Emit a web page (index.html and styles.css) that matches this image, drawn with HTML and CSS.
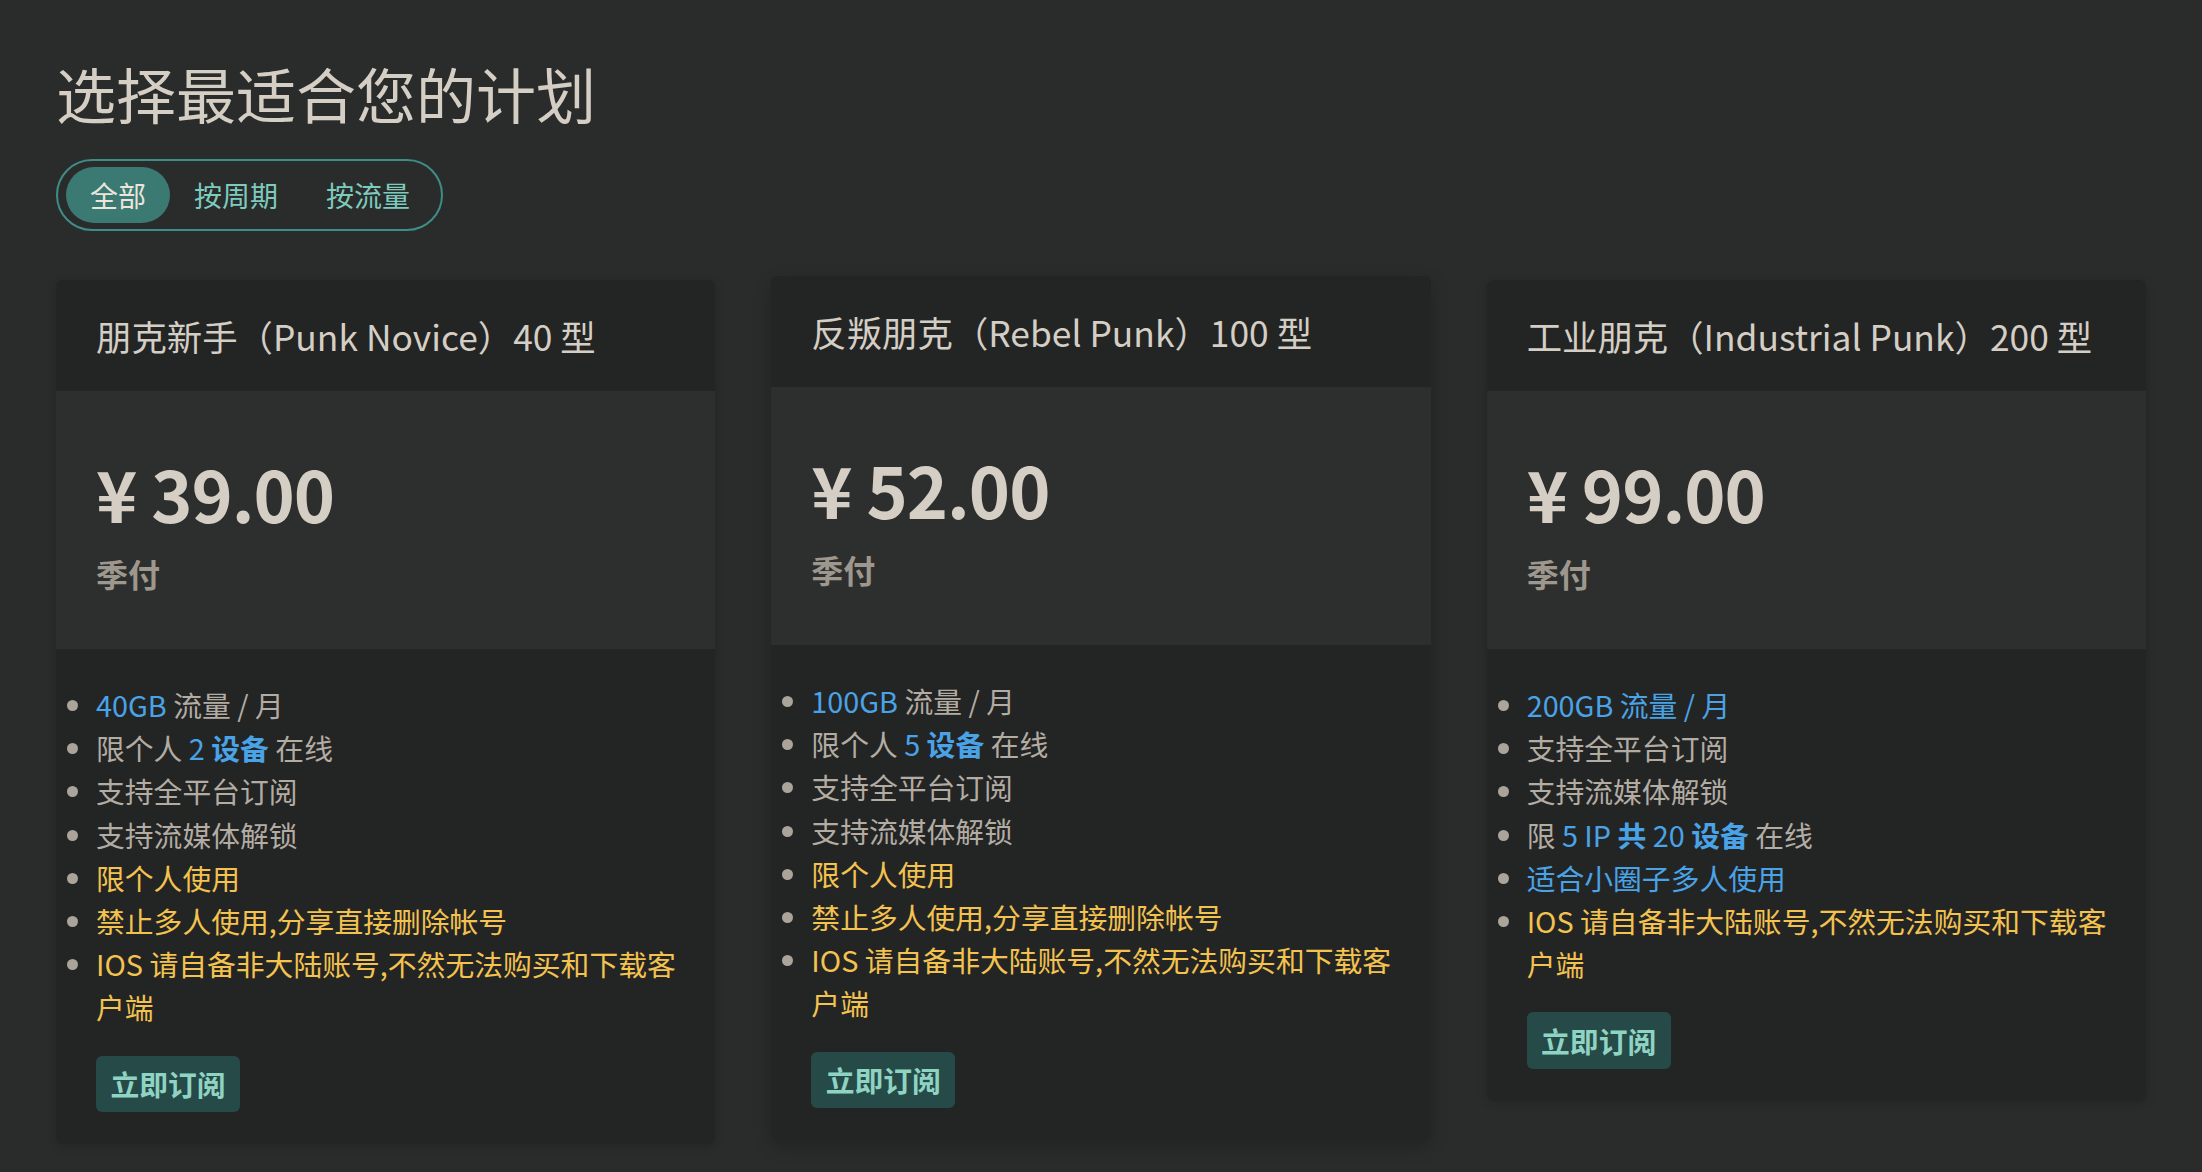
FILE: index.html
```html
<!DOCTYPE html>
<html lang="zh-CN">
<head>
<meta charset="utf-8">
<title>选择最适合您的计划</title>
<link rel="stylesheet" href="styles.css">
</head>
<body>
<main class="page">
  <h1 class="page-title">选择最适合您的计划</h1>
  <div class="filter">
    <button class="filter-btn active">全部</button>
    <button class="filter-btn">按周期</button>
    <button class="filter-btn">按流量</button>
  </div>
  <div class="plans">
    <section class="plan">
      <header class="plan-head"><h2>朋克新手（Punk Novice）40 型</h2></header>
      <div class="plan-price">
        <div class="amount">¥ 39.00</div>
        <div class="period">季付</div>
      </div>
      <div class="plan-body">
        <ul class="features">
          <li><span class="hl">40GB</span> 流量 / 月</li>
          <li>限个人 <span class="hl">2</span> <strong class="hl">设备</strong> 在线</li>
          <li>支持全平台订阅</li>
          <li>支持流媒体解锁</li>
          <li class="warn">限个人使用</li>
          <li class="warn">禁止多人使用,分享直接删除帐号</li>
          <li class="warn">IOS 请自备非大陆账号,不然无法购买和下载客户端</li>
        </ul>
        <button class="subscribe">立即订阅</button>
      </div>
    </section>
    <section class="plan raised">
      <header class="plan-head"><h2>反叛朋克（Rebel Punk）100 型</h2></header>
      <div class="plan-price">
        <div class="amount">¥ 52.00</div>
        <div class="period">季付</div>
      </div>
      <div class="plan-body">
        <ul class="features">
          <li><span class="hl">100GB</span> 流量 / 月</li>
          <li>限个人 <span class="hl">5</span> <strong class="hl">设备</strong> 在线</li>
          <li>支持全平台订阅</li>
          <li>支持流媒体解锁</li>
          <li class="warn">限个人使用</li>
          <li class="warn">禁止多人使用,分享直接删除帐号</li>
          <li class="warn">IOS 请自备非大陆账号,不然无法购买和下载客户端</li>
        </ul>
        <button class="subscribe">立即订阅</button>
      </div>
    </section>
    <section class="plan">
      <header class="plan-head"><h2>工业朋克（Industrial Punk）200 型</h2></header>
      <div class="plan-price">
        <div class="amount">¥ 99.00</div>
        <div class="period">季付</div>
      </div>
      <div class="plan-body">
        <ul class="features">
          <li class="hl">200GB 流量 / 月</li>
          <li>支持全平台订阅</li>
          <li>支持流媒体解锁</li>
          <li>限 <span class="hl">5 IP</span> <strong class="hl">共</strong> <span class="hl">20</span> <strong class="hl">设备</strong> 在线</li>
          <li class="hl">适合小圈子多人使用</li>
          <li class="warn">IOS 请自备非大陆账号,不然无法购买和下载客户端</li>
        </ul>
        <button class="subscribe">立即订阅</button>
      </div>
    </section>
  </div>
</main>
</body>
</html>
```
FILE: styles.css
```css
html, body {
  margin: 0;
  background: #2a2c2c;
}
body {
  font-family: "Noto Sans CJK SC", sans-serif;
  color: #d5cec4;
}
.page {
  padding: 57px 56px 40px;
}
.page-title {
  margin: 0;
  font-size: 60px;
  font-weight: 400;
  line-height: 72px;
  color: #d5cec4;
}
.filter {
  display: flex;
  width: fit-content;
  margin-top: 30px;
  border: 2px solid #3f8d87;
  border-radius: 40px;
  padding: 6px 7px 6px 8px;
}
.filter-btn {
  font: inherit;
  font-size: 28px;
  line-height: 56px;
  padding: 0 24px;
  border: 0;
  background: none;
  color: #7dcbbd;
  border-radius: 28px;
  cursor: pointer;
}
.filter-btn.active {
  background: #3a7a73;
  color: #ebe5db;
}
.plans {
  margin-top: 49px;
  display: grid;
  grid-template-columns: repeat(3, 1fr);
  gap: 56px;
  align-items: start;
}
.plan {
  background: #232525;
  border-radius: 8px;
  overflow: hidden;
  box-shadow: 0 2px 10px rgba(0, 0, 0, 0.18);
}
.plan.raised {
  transform: translateY(-4px);
  box-shadow: 0 6px 18px rgba(0, 0, 0, 0.22);
}
.plan-head {
  padding: 29px 40px 28px;
  background: #232525;
}
.plan-head h2 {
  margin: 0;
  font-size: 35.4px;
  font-weight: 400;
  line-height: 54px;
  color: #d5cec4;
}
.plan-price {
  background: #2d2f2f;
  padding: 59px 40px 52px;
}
.amount {
  font-size: 70px;
  font-weight: 700;
  letter-spacing: -1px;
  line-height: 86px;
  color: #d5cec4;
}
.period {
  margin-top: 13px;
  font-size: 32px;
  font-weight: 700;
  line-height: 48px;
  color: #9e978d;
}
.plan-body {
  padding: 34px 20px 32px 40px;
}
.features {
  margin: 0;
  padding: 0;
  list-style: disc;
  font-size: 28.8px;
  line-height: 43.2px;
  color: #b3aca3;
}
.features li::marker {
  color: #aaa49a;
}
.hl {
  color: #4aa3e6;
}
strong.hl {
  font-weight: 700;
}
.warn {
  color: #f3c24f;
}
.subscribe {
  display: block;
  margin-top: 27px;
  font: inherit;
  font-size: 28.8px;
  font-weight: 700;
  line-height: 43.2px;
  padding: 6.6px 14.4px;
  border: 0;
  border-radius: 6px;
  background: #264a47;
  color: #8fd3c3;
  cursor: pointer;
}
```
